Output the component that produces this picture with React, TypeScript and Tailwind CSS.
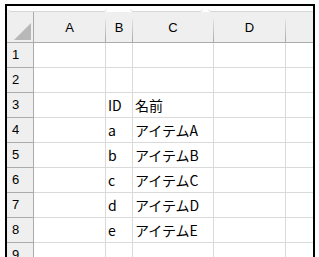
import React from 'react'

const cols = [
  { key: 'A', w: 'w-[72px]' },
  { key: 'B', w: 'w-[27px]' },
  { key: 'C', w: 'w-[81px]' },
  { key: 'D', w: 'w-[72px]' },
  { key: '', w: 'flex-1' },
]

const data: Record<number, string[]> = {
  3: ['', 'ID', '名前', '', ''],
  4: ['', 'a', 'アイテムA', '', ''],
  5: ['', 'b', 'アイテムB', '', ''],
  6: ['', 'c', 'アイテムC', '', ''],
  7: ['', 'd', 'アイテムD', '', ''],
  8: ['', 'e', 'アイテムE', '', ''],
}

const rows = [1, 2, 3, 4, 5, 6, 7, 8, 9]

export default function App() {
  return (
    <div className="w-[319px] h-[257px] bg-white overflow-hidden pt-[4px] pl-[5px]">
      <div className="w-[310px] h-[260px] border-2 border-black overflow-hidden bg-white font-['Liberation_Sans',sans-serif]">
        {/* top strip with tab notches */}
        <div className="flex h-[6px] bg-white">
          <div className="w-[100px] border-b border-[#d6d6d6] rounded-b-[4px]" />
          <div className="w-[23px]" />
          <div className="w-[73px] border-b border-[#d6d6d6] rounded-b-[4px]" />
          <div className="w-[5px]" />
          <div className="flex-1 border-b border-[#d6d6d6] rounded-bl-[4px]" />
        </div>

        {/* column headers */}
        <div className="flex h-[31px] bg-[#efefef] border-b border-[#ababab]">
          <div className="w-[27px] flex items-end justify-end pr-[2px] pb-[2px] border-r border-[#ababab]">
            <svg width="17" height="17" viewBox="0 0 17 17">
              <polygon points="17,0 17,17 0,17" fill="#b8b8b8" />
            </svg>
          </div>
          {cols.map((c, i) => (
            <div key={i} className={`${c.w} flex`}>
              <div className="flex-1 flex items-center justify-center text-[13px] text-black pt-[1px]">
                {c.key}
              </div>
              {c.key && <div className="w-px self-end h-[23px] bg-gradient-to-b from-[#e4e4e4] to-[#a8a8a8]" />}
            </div>
          ))}
        </div>

        {/* rows */}
        {rows.map((r) => (
          <div key={r} className="flex h-[25px]">
            <div className="w-[27px] bg-[#efefef] border-r border-b border-[#ababab] flex items-center pl-[5px] text-[13px] text-black">
              {r}
            </div>
            {cols.map((c, i) => (
              <div
                key={i}
                className={`${c.w} border-b border-[#dadada] ${c.key ? 'border-r' : ''} flex items-center pl-[2px] pt-[1px] text-[14px] text-black font-['Noto_Sans_CJK_JP',sans-serif] whitespace-nowrap overflow-hidden`}
              >
                {data[r]?.[i] ?? ''}
              </div>
            ))}
          </div>
        ))}
      </div>
    </div>
  )
}
